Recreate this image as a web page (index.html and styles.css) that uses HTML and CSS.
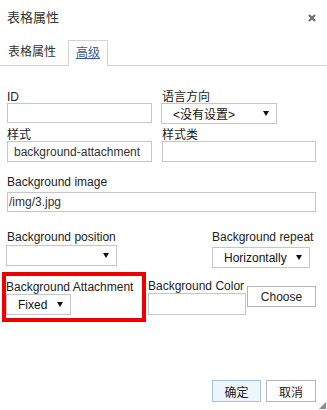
FILE: index.html
```html
<!DOCTYPE html>
<html lang="zh">
<head>
<meta charset="utf-8">
<title>表格属性</title>
<link rel="stylesheet" href="styles.css">
</head>
<body>
<div class="dialog">
  <div class="titlebar">
    <span class="title">表格属性</span>
    <svg class="close" width="8" height="8" viewBox="0 0 8 8"><path d="M1 1 L7 7 M7 1 L1 7" stroke="#6a6a6a" stroke-width="2" fill="none"/></svg>
  </div>
  <div class="tabs">
    <span class="tab">表格属性</span>
    <span class="tab active"><span class="tab-label">高级</span></span>
  </div>
  <div class="content">
    <div class="row row-1">
      <div class="field col-left">
        <span class="label">ID</span>
        <div class="input"></div>
      </div>
      <div class="field col-right">
        <span class="label">语言方向</span>
        <div class="select sel-dir"><span>&lt;没有设置&gt;</span><i class="arrow"></i></div>
      </div>
    </div>
    <div class="row row-2">
      <div class="field col-left">
        <span class="label">样式</span>
        <div class="input input-tall input-pad">background-attachment</div>
      </div>
      <div class="field col-right">
        <span class="label">样式类</span>
        <div class="input input-tall"></div>
      </div>
    </div>
    <div class="field row-bgimg">
      <span class="label">Background image</span>
      <div class="input input-img">/img/3.jpg</div>
    </div>
    <div class="row row-pos">
      <div class="field">
        <span class="label">Background position</span>
        <div class="select sel-pos"><span></span><i class="arrow"></i></div>
      </div>
      <div class="field col-repeat">
        <span class="label">Background repeat</span>
        <div class="select sel-repeat"><span>Horizontally</span><i class="arrow"></i></div>
      </div>
    </div>
    <div class="row row-attach">
      <div class="highlight">
        <span class="label">Background Attachment</span>
        <div class="select sel-fixed"><span>Fixed</span><i class="arrow"></i></div>
      </div>
      <div class="field col-color">
        <span class="label">Background Color</span>
        <div class="input input-color"></div>
      </div>
      <button class="btn btn-choose" type="button">Choose</button>
    </div>
    <div class="footer">
      <button class="btn btn-ok" type="button">确定</button>
      <button class="btn btn-cancel" type="button">取消</button>
    </div>
  </div>
  <svg class="grip" width="7" height="7" viewBox="0 0 7 7"><path d="M7 0 L7 7 L0 7 Z" fill="#8a8a8a"/></svg>
</div>
</body>
</html>
```
FILE: styles.css
```css
html, body {
  margin: 0;
  padding: 0;
  background: #fff;
}
body {
  width: 327px;
  height: 410px;
  overflow: hidden;
  font-family: "Liberation Sans", "Noto Sans CJK SC", sans-serif;
  font-size: 12px;
  color: #222;
}
.dialog {
  position: relative;
  width: 327px;
  height: 410px;
}
.titlebar {
  display: flex;
  justify-content: space-between;
  align-items: flex-start;
  height: 40px;
  box-sizing: border-box;
  padding: 10px 11px 0 7px;
}
.title {
  font-size: 13px;
  line-height: 16px;
  color: #333;
}
.close {
  margin-top: 4px;
}
.tabs {
  display: flex;
  align-items: flex-end;
  height: 26px;
  box-sizing: border-box;
  border-bottom: 1px solid #d4d4d4;
}
.tab {
  padding: 0 8px;
  line-height: 25px;
  color: #333;
}
.tab.active {
  margin-left: 4px;
  margin-bottom: -1px;
  height: 26px;
  box-sizing: border-box;
  padding: 0 7px;
  border: 1px solid #d4d4d4;
  border-bottom: none;
  background: #fff;
  line-height: 25px;
}
.tab-label {
  color: #3b5a88;
  text-decoration: underline;
}
.content {
  padding: 0 11px 0 7px;
}
.row {
  display: flex;
}
.field {
  display: flex;
  flex-direction: column;
}
.label {
  display: block;
  height: 12px;
  line-height: 12px;
  white-space: nowrap;
  color: #222;
}
.row-1 {
  margin-top: 25px;
  gap: 10px;
}
.row-2 {
  margin-top: 5px;
  gap: 10px;
}
.col-left {
  width: 145px;
}
.col-right {
  flex: 1;
}
.input {
  height: 20px;
  box-sizing: border-box;
  border: 1px solid #c6c6c6;
  background: #fff;
  display: flex;
  align-items: center;
  color: #333;
  white-space: nowrap;
  overflow: hidden;
}
.input-tall {
  height: 21px;
}
.input-pad {
  padding-left: 6px;
}
.row-bgimg {
  margin-top: 14px;
}
.row-bgimg .label {
  margin-bottom: 4px;
}
.input-img {
  padding-left: 1px;
}
.select {
  height: 21px;
  box-sizing: border-box;
  border: 1px solid #c6c6c6;
  background: #fff;
  display: flex;
  align-items: center;
  justify-content: space-between;
  padding: 0 7px 0 11px;
  color: #111;
  white-space: nowrap;
}
.arrow {
  width: 0;
  height: 0;
  border-left: 3px solid transparent;
  border-right: 3px solid transparent;
  border-top: 5px solid #111;
}
.sel-dir {
  width: 116px;
  margin-left: -1px;
}
.row-pos {
  margin-top: 19px;
  justify-content: space-between;
}
.row-pos .select {
  margin-top: 2px;
}
.sel-pos {
  width: 111px;
  margin-left: -1px;
}
.col-repeat {
  width: 104px;
}
.col-repeat .select {
  margin-top: 4px;
}
.sel-repeat {
  width: 98px;
}
.row-attach {
  margin-top: 4px;
  align-items: flex-start;
}
.highlight {
  width: 144px;
  height: 50px;
  box-sizing: border-box;
  margin-left: -5px;
  border: 4px solid #ee0000;
  padding-top: 5px;
  display: flex;
  flex-direction: column;
}
.highlight .select {
  margin-top: 1px;
}
.sel-fixed {
  width: 65px;
}
.col-color {
  margin-left: 2px;
  padding-top: 8px;
}
.input-color {
  width: 98px;
  height: 22px;
  margin-top: 1px;
}
.btn {
  font-family: "Liberation Sans", "Noto Sans CJK SC", sans-serif;
  font-size: 12px;
  color: #222;
  background: #fff;
  border: 1px solid #b5b5b5;
  box-sizing: border-box;
  padding: 0;
  margin: 0;
  cursor: pointer;
}
.btn-choose {
  width: 69px;
  height: 21px;
  margin-top: 14px;
  margin-left: 1px;
}
.footer {
  display: flex;
  justify-content: flex-end;
  gap: 5px;
  margin-top: 58px;
}
.btn-ok {
  width: 49px;
  height: 22px;
  background: #eef5fc;
  border-color: #a3c3e3;
}
.btn-cancel {
  width: 50px;
  height: 22px;
}
.grip {
  position: absolute;
  right: 1px;
  bottom: 1px;
}
```
